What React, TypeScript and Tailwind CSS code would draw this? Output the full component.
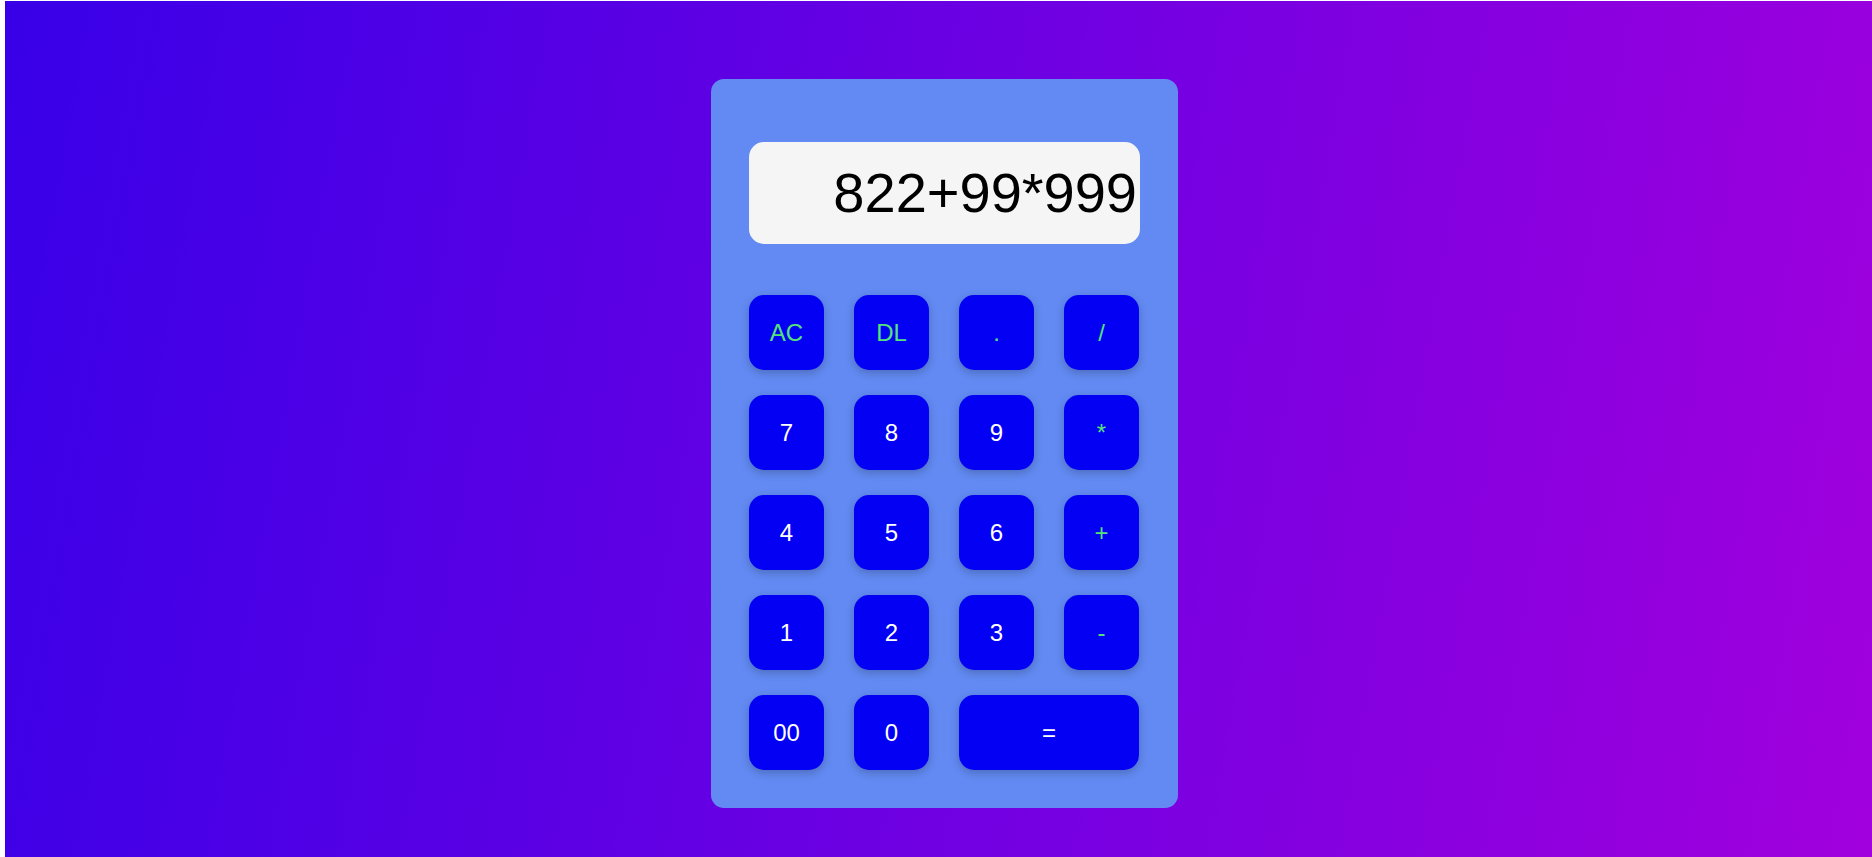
const rows: { label: string; op?: boolean; wide?: boolean }[][] = [
  [{ label: "AC", op: true }, { label: "DL", op: true }, { label: ".", op: true }, { label: "/", op: true }],
  [{ label: "7" }, { label: "8" }, { label: "9" }, { label: "*", op: true }],
  [{ label: "4" }, { label: "5" }, { label: "6" }, { label: "+", op: true }],
  [{ label: "1" }, { label: "2" }, { label: "3" }, { label: "-", op: true }],
  [{ label: "00" }, { label: "0" }, { label: "=", wide: true }],
]

export default function App() {
  return (
    <div className="w-full h-[857px] bg-white pl-[5px] pt-px font-['Liberation_Sans',Arial,sans-serif]">
      <div className="h-full flex justify-center items-start pl-[12px] pt-[78px] bg-[linear-gradient(100deg,#3800e8,#a100dd)]">
        <div className="w-[467px] h-[729px] rounded-[13px] bg-[#628af2] px-[38px] pt-[63px]">
          <div className="h-[102px] rounded-[15px] bg-[#f5f5f5] flex items-center justify-end pr-[3px] mb-[50px]">
            <span className="text-[56px] leading-none text-black">822+99*999</span>
          </div>
          <div className="grid grid-cols-[repeat(4,75px)] gap-x-[30px] gap-y-[25px] pt-px">
            {rows.flat().map((b) => (
              <button
                key={b.label}
                className={`h-[75px] rounded-[15px] bg-[#0400f4] shadow-[0_3px_8px_rgba(0,0,0,0.22)] text-[24px] flex items-center justify-center ${
                  b.wide ? "col-span-2" : ""
                } ${b.op ? "text-[#55e27a]" : "text-white"}`}
              >
                {b.label}
              </button>
            ))}
          </div>
        </div>
      </div>
    </div>
  )
}
